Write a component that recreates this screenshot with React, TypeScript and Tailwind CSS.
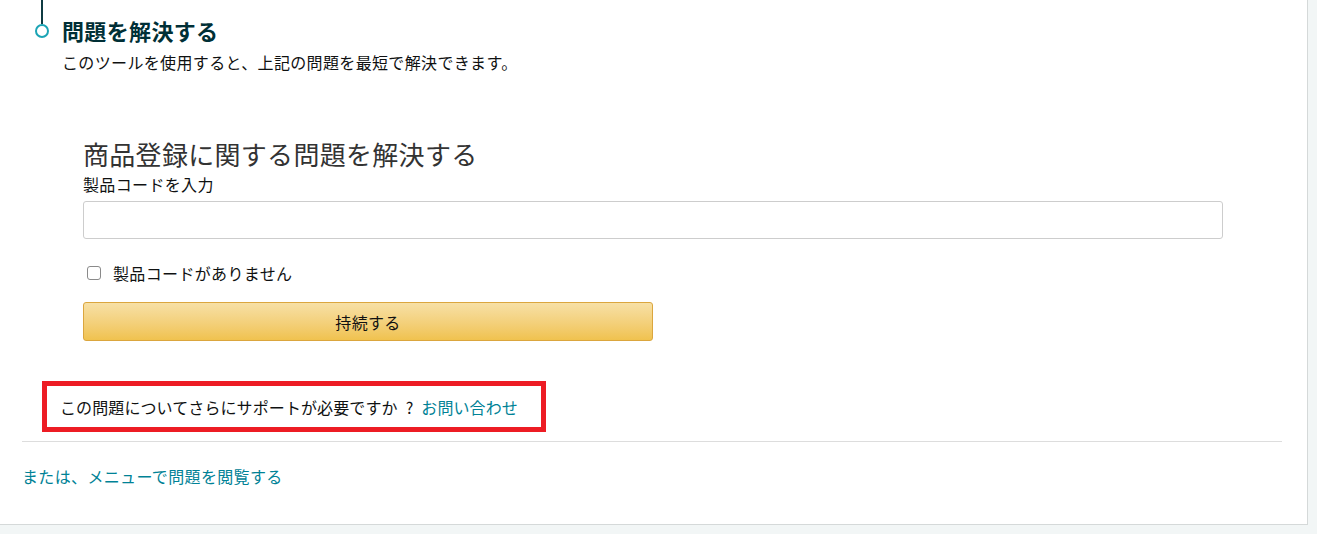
import { useState } from 'react'

const font = { fontFamily: '"Noto Sans CJK JP", "Noto Sans", sans-serif' }

export default function App() {
  const [code, setCode] = useState('')
  const [noCode, setNoCode] = useState(false)

  return (
    <div className="w-[1317px] h-[534px] overflow-hidden bg-[#f2f6f6] tracking-[0.35px]" style={font}>
      {/* card */}
      <div className="w-[1308px] h-[525px] bg-white border-r border-b border-[#d5d9d9] pl-[22px]">
        {/* step header */}
        <div className="flex ml-[13px]">
          <div className="flex flex-col items-center w-[14px]">
            <div className="w-[2px] h-[24px] bg-[#0f3b42]" />
            <div className="w-[14px] h-[14px] rounded-full border-2 border-[#1ba4b5] bg-white" />
          </div>
          <div className="ml-[13px]">
            <h2 className="mt-[15px] text-[22px] leading-[30px] font-bold text-[#002f36]">問題を解決する</h2>
            <p className="mt-[5px] text-[16px] leading-[24px] text-[#0f1111]">
              このツールを使用すると、上記の問題を最短で解決できます。
            </p>
          </div>
        </div>

        {/* form */}
        <div className="ml-[61px] w-[1140px]">
          <h3 className="mt-[64px] text-[26px] leading-[32px] text-[#333] tracking-[0.3px]">商品登録に関する問題を解決する</h3>
          <label className="block mt-[4px] text-[16px] leading-[20px] text-[#0f1111]">製品コードを入力</label>
          <input
            value={code}
            onChange={(e) => setCode(e.target.value)}
            className="block mt-[7px] w-[1140px] h-[38px] rounded-[3px] border border-[#cdcdcd] px-3 outline-none"
          />
          <label className="mt-[24px] flex items-center h-[20px] cursor-pointer">
            <span
              onClick={() => setNoCode(!noCode)}
              className={`ml-[4px] w-[14px] h-[14px] rounded-[3px] border border-[#8a8a8a] ${noCode ? 'bg-[#008296]' : 'bg-white'}`}
            />
            <span className="ml-[12px] text-[16px] leading-[20px] text-[#0f1111]">製品コードがありません</span>
          </label>
          <button className="mt-[19px] w-[570px] h-[39px] rounded-[3px] border border-[#dba63e] bg-gradient-to-b from-[#f7e0a5] to-[#f0c24e] text-[16px] text-[#111]">
            持続する
          </button>
        </div>

        {/* support */}
        <div className="mt-[40px] ml-[20px] w-[504px] h-[51px] border-[5px] border-[#ed1c24] flex items-center pl-[13px]">
          <span className="text-[16px] leading-[20px] text-[#0f1111] tracking-[0.1px]">
            この問題についてさらにサポートが必要ですか<span className="mx-[8px]">?</span><a className="text-[#008296] cursor-pointer">お問い合わせ</a>
          </span>
        </div>

        <div className="mt-[9px] w-[1260px] h-px bg-[#dddddd]" />

        <a className="block mt-[24px] text-[16px] leading-[20px] text-[#008296] cursor-pointer">
          または、メニューで問題を閲覧する
        </a>
      </div>
    </div>
  )
}
